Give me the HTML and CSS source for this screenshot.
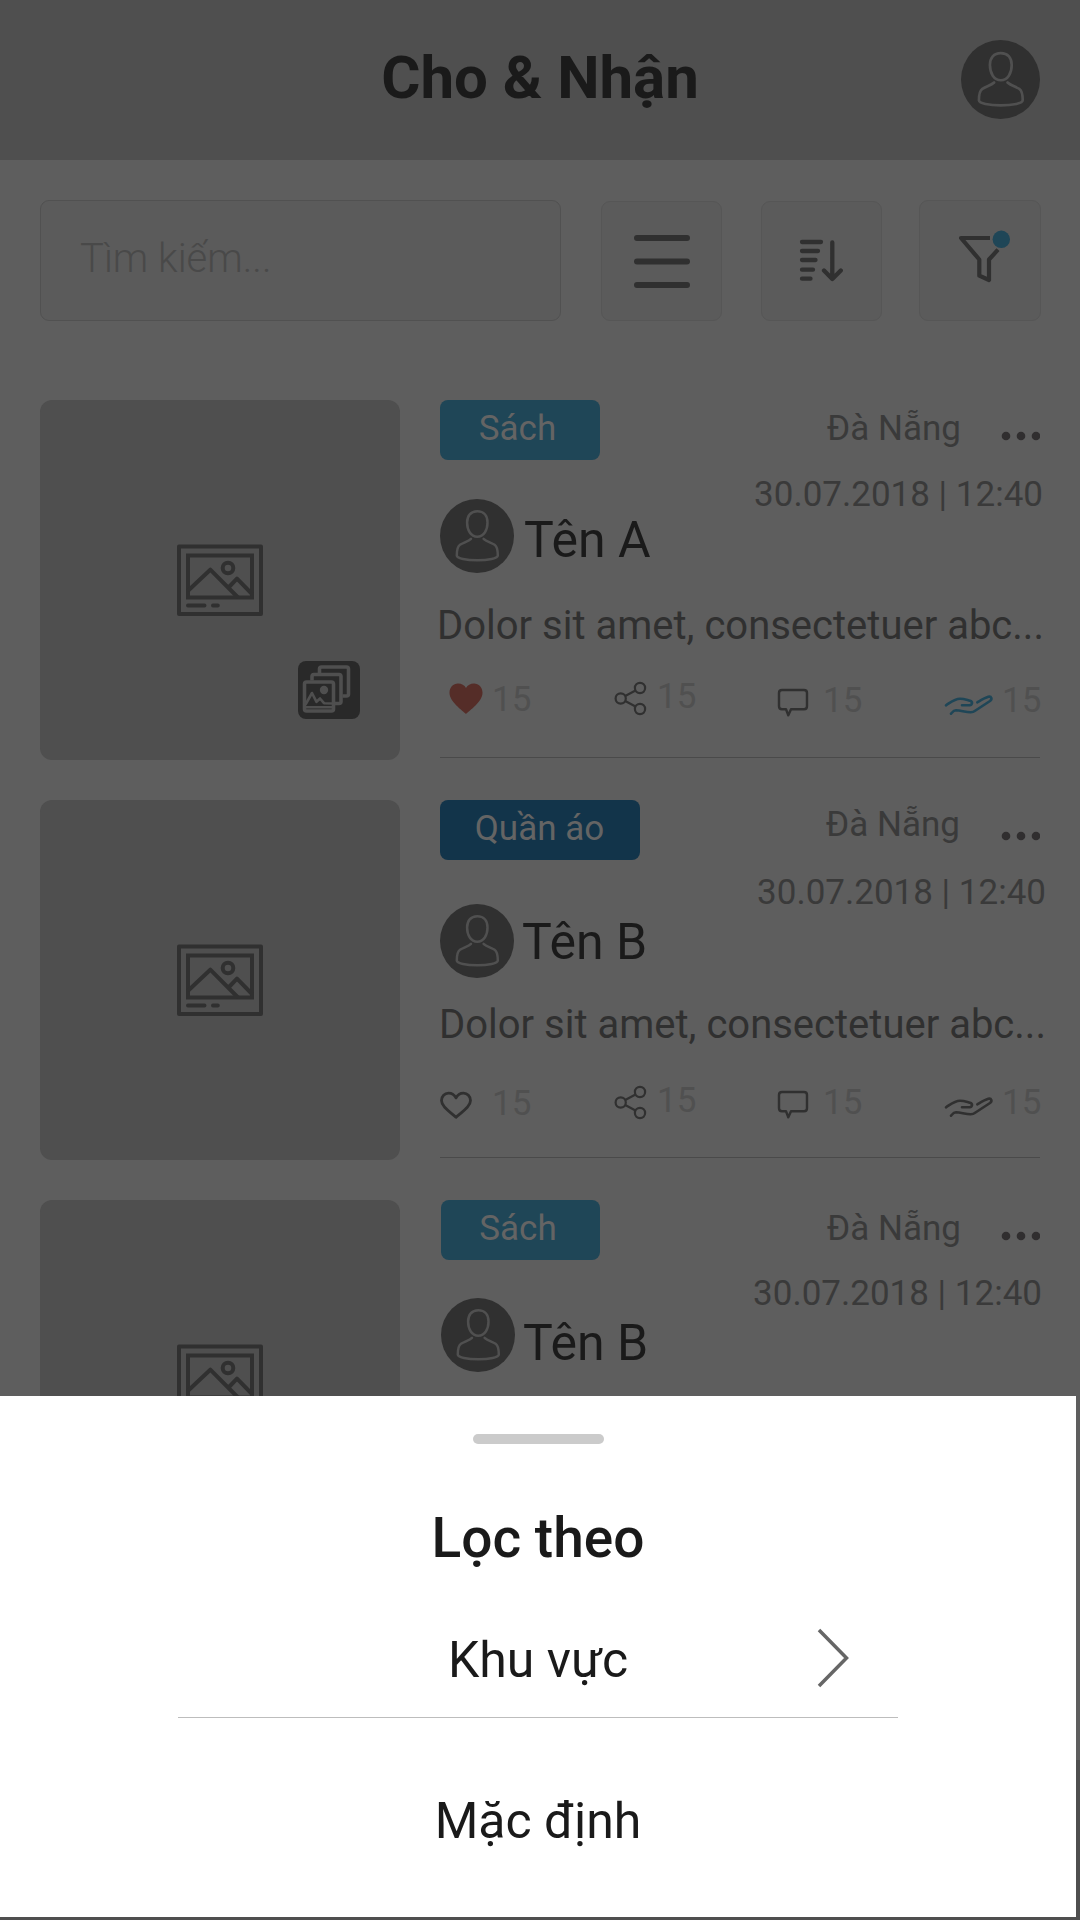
FILE: index.html
```html
<!DOCTYPE html>
<html lang="vi">
<head>
<meta charset="utf-8">
<title>Cho &amp; Nhận</title>
<link rel="stylesheet" href="styles.css">
</head>
<body>
<svg class="defs" aria-hidden="true">
  <symbol id="avatar" viewBox="0 0 74 74">
    <circle cx="37" cy="37" r="37" fill="#303030"/>
    <g fill="none" stroke="#505050" stroke-width="2.5" stroke-linecap="round">
      <path d="M37.300 12.300c-6.600 0-10.200 4.500-10.200 11.200 0 7.600 3.700 14.200 10.200 14.200s10.200-6.600 10.200-14.200c0-6.700-3.600-11.200-10.200-11.200z"/>
      <path d="M31 39.800c-2.500 2.600-7.500 3.700-11 6-3 2-3.200 6-3.200 10.700 0 2.800 9.500 4.800 20.500 4.800s20.500-2 20.500-4.800c0-4.700-.2-8.700-3.200-10.700-3.500-2.300-8.500-3.400-11-6"/>
    </g>
  </symbol>
  <symbol id="picture" viewBox="0 0 86 72">
    <g fill="none" stroke="#303030" stroke-width="4" stroke-linejoin="round" stroke-linecap="round">
      <rect x="2" y="2.500" width="82" height="67.500"/>
      <rect x="11" y="11.500" width="64" height="42" stroke-linejoin="miter"/>
      <circle cx="51" cy="24" r="5.300"/>
      <path stroke-linecap="butt" d="M11 46.800 33.300 25.700 61 53.500M52 43 60 34.700 75 50"/>
      <path d="M11 61.400H27.500M36 61.400H40.800"/>
    </g>
  </symbol>
  <symbol id="gallery" viewBox="0 0 62 58">
    <g fill="none" stroke="#4f4f4f" stroke-width="3.600" stroke-linejoin="round">
      <path d="M21.500 12V8q0-2 2-2h25q2 0 2 2v25q0 2-2 2h-4"/>
      <path d="M14 19.500V15.500q0-2 2-2h25q2 0 2 2v25q0 2-2 2h-4"/>
      <rect x="6.500" y="21" width="29" height="29" rx="2"/>
      <path stroke-width="2.600" d="M7.500 43.500 14 32l4.500 8.800L22 37.500l4 4.700 10 .3M7 46.200H35"/>
    </g>
    <circle cx="26" cy="29" r="4.200" fill="#4f4f4f"/>
  </symbol>
  <symbol id="heart-full" viewBox="0 0 50 50">
    <path fill="#552d28" d="M26 42C22.500 38.500 9.500 30 9.500 20.800c0-5.300 3.800-9.200 8.500-9.200 3.500 0 6.500 1.800 8 4.400 1.500-2.600 4.500-4.400 8-4.400 4.700 0 8.500 3.900 8.500 9.200C42.500 30 29.500 38.500 26 42z"/>
  </symbol>
  <symbol id="heart-line" viewBox="0 0 50 50">
    <path fill="none" stroke="#303030" stroke-width="2.800" stroke-linejoin="round" d="M16 41.300C12 37 1.500 31.500 1.500 24.500c0-4.300 3.200-7.400 7-7.400 3.200 0 6 1.700 7.500 4.800 1.500-3.100 4.300-4.800 7.500-4.800 3.800 0 7 3.100 7 7.400C30.500 31.500 20 37 16 41.300z"/>
  </symbol>
  <symbol id="share" viewBox="0 0 47 50">
    <g fill="none" stroke="#303030" stroke-width="2.200">
      <circle cx="10.700" cy="26.500" r="5.100"/>
      <circle cx="30" cy="16" r="5.100"/>
      <circle cx="30" cy="37" r="5.100"/>
      <path d="M15.200 24 25.500 18.500M15.200 29 25.500 34.500"/>
    </g>
  </symbol>
  <symbol id="comment" viewBox="0 0 50 50">
    <path fill="none" stroke="#303030" stroke-width="2.400" stroke-linejoin="round" d="M10 18H32q3 0 3 3V34.300q0 3-3 3H19l-2.700 6L14 37.300H10q-3 0-3-3V21q0-3 3-3z"/>
  </symbol>
  <symbol id="hand" viewBox="0 0 61 50">
    <path fill="none" stroke="currentColor" stroke-width="2.600" stroke-linecap="round" stroke-linejoin="round" d="M6 33.300C10.500 30.500 14.500 26.800 20 26.700c4.500 0 7 1.300 10 2 3 .8 2.500 4-.5 4.600H22M11 41.700C12.500 40 13.500 38.300 16 38.300c5 .5 10 1.700 14.500 2 2.500.1 3.500-.6 5-1.800L50 29c2.500-2 1.500-5-1.700-4.200C44.500 26 41 28.200 37.300 30.300"/>
  </symbol>
  <symbol id="dots" viewBox="0 0 40 20">
    <g fill="#302e2f"><circle cx="6" cy="10" r="4.300"/><circle cx="21" cy="10" r="4.300"/><circle cx="36" cy="10" r="4.300"/></g>
  </symbol>
</svg>

<div class="screen">
  <header class="topbar">
    <h1>Cho &amp; Nhận</h1>
    <svg class="profile"><use href="#avatar"/></svg>
  </header>

  <div class="toolbar">
    <div class="search">Tìm kiếm...</div>
    <div class="tool">
      <svg viewBox="0 0 121 120"><path d="M36 37H86M36 60.500H86M36 84H86" stroke-width="6"/></svg>
    </div>
    <div class="tool">
      <svg viewBox="0 0 121 120"><path d="M41 41H60M41 50H57M41 59H54.500M41 68.700H52M41 77.700H49.500M71.300 41.500V78M63 69.500 71.300 78 79.800 69.500" stroke-width="4.300"/></svg>
    </div>
    <div class="tool tool-filter">
      <svg viewBox="0 0 121 120"><path class="butt" d="M71 38H42L60.300 59.500V75.700L70 80V59.500L79 49.700" stroke-width="4.200"/><circle cx="82.300" cy="39.300" r="8.700"/></svg>
    </div>
  </div>

  <main class="list">
    <article class="card">
      <div class="thumb">
        <svg class="picture"><use href="#picture"/></svg>
        <svg class="gallery"><use href="#gallery"/></svg>
      </div>
      <div class="body">
        <div class="top">
          <div class="left">
            <span class="tag book">Sách</span>
            <div class="author"><svg class="avatar"><use href="#avatar"/></svg><span class="name">Tên A</span></div>
          </div>
          <div class="right">
            <div class="where"><span class="place">Đà Nẵng</span><svg class="dots"><use href="#dots"/></svg></div>
            <div class="date">30.07.2018 | 12:40</div>
          </div>
        </div>
        <p class="desc">Dolor sit amet, consectetuer abc...</p>
        <div class="stats">
          <span class="stat like"><svg><use href="#heart-full"/></svg>15</span>
          <span class="stat share"><svg><use href="#share"/></svg>15</span>
          <span class="stat talk"><svg><use href="#comment"/></svg>15</span>
          <span class="stat give"><svg class="active"><use href="#hand"/></svg>15</span>
        </div>
      </div>
    </article>

    <article class="card">
      <div class="thumb"><svg class="picture"><use href="#picture"/></svg></div>
      <div class="body">
        <div class="top">
          <div class="left">
            <span class="tag clothes">Quần áo</span>
            <div class="author"><svg class="avatar"><use href="#avatar"/></svg><span class="name">Tên B</span></div>
          </div>
          <div class="right">
            <div class="where"><span class="place">Đà Nẵng</span><svg class="dots"><use href="#dots"/></svg></div>
            <div class="date">30.07.2018 | 12:40</div>
          </div>
        </div>
        <p class="desc">Dolor sit amet, consectetuer abc...</p>
        <div class="stats">
          <span class="stat like"><svg><use href="#heart-line"/></svg>15</span>
          <span class="stat share"><svg><use href="#share"/></svg>15</span>
          <span class="stat talk"><svg><use href="#comment"/></svg>15</span>
          <span class="stat give"><svg><use href="#hand"/></svg>15</span>
        </div>
      </div>
    </article>

    <article class="card">
      <div class="thumb"><svg class="picture"><use href="#picture"/></svg></div>
      <div class="body">
        <div class="top">
          <div class="left">
            <span class="tag book">Sách</span>
            <div class="author"><svg class="avatar"><use href="#avatar"/></svg><span class="name">Tên B</span></div>
          </div>
          <div class="right">
            <div class="where"><span class="place">Đà Nẵng</span><svg class="dots"><use href="#dots"/></svg></div>
            <div class="date">30.07.2018 | 12:40</div>
          </div>
        </div>
      </div>
    </article>
  </main>

  <footer class="bottombar"></footer>

  <section class="sheet">
    <div class="handle"></div>
    <h2>Lọc theo</h2>
    <div class="option"><span></span><span>Khu vực</span><svg class="chevron" viewBox="0 0 32 60"><path d="M2 2 29.500 30 2 58"/></svg></div>
    <div class="option last"><span></span><span>Mặc định</span></div>
  </section>
</div>
</body>
</html>
```
FILE: styles.css
```css
* { box-sizing: border-box; }

body {
  margin: 0;
  font-family: Roboto, "Liberation Sans", sans-serif;
  background: #5e5e5e;
}

h1, h2, p { margin: 0; }

svg { display: block; flex: none; }

.defs { display: none; }

.screen {
  position: relative;
  display: flex;
  flex-direction: column;
  width: 1080px;
  height: 1920px;
  overflow: hidden;
}

/* Header */
.topbar {
  display: grid;
  grid-template-columns: 80px 1fr 80px;
  align-items: center;
  height: 160px;
  padding: 0 40px;
  background: #4f4f4f;
}

.topbar h1 {
  grid-column: 2;
  font-size: 60px;
  font-weight: 700;
  line-height: 70px;
  padding-bottom: 4px;
  text-align: center;
  color: #1a1a1a;
}

.profile { width: 79px; height: 79px; margin: -1px 0 0 1px; }

/* Search and tools */
.toolbar {
  display: flex;
  align-items: flex-end;
  height: 161px;
  padding: 0 39px 0 40px;
}

.search {
  width: 521px;
  height: 121px;
  margin-right: 40px;
  padding-left: 39px;
  border: 1px solid #515151;
  border-radius: 9px;
  background: #5b5b5b;
  font-size: 40px;
  font-weight: 300;
  line-height: 116px;
  color: #494949;
}

.tool {
  width: 121px;
  height: 120px;
  margin-right: 39px;
  border: 1px solid #565656;
  border-radius: 9px;
  background: #5b5b5b;
}

.tool-filter { width: 122px; height: 121px; margin: 0 0 0 -2px; }

.tool svg {
  width: 121px;
  height: 120px;
  margin: -1px;
  fill: none;
  stroke: #303030;
  stroke-linecap: round;
  stroke-linejoin: round;
}

.tool .butt { stroke-linecap: butt; }
.tool circle { fill: #1f4657; stroke: none; }

/* List */
.list {
  display: flex;
  flex-direction: column;
  gap: 40px;
  flex: none;
  height: 1439px;
  padding: 79px 40px 0;
  overflow: hidden;
}

.card { display: flex; gap: 40px; flex: none; height: 360px; }

.thumb {
  position: relative;
  display: flex;
  align-items: center;
  justify-content: center;
  width: 360px;
  border-radius: 12px;
  background: #4f4f4f;
}

.picture { width: 86px; height: 72px; }

.gallery {
  position: absolute;
  right: 40px;
  bottom: 41px;
  width: 62px;
  height: 58px;
  border-radius: 8px;
  background: #292929;
}

.body { width: 600px; height: 358px; border-bottom: 1px solid #4a4a4a; }

.top { display: flex; justify-content: space-between; height: 200px; }

.tag {
  display: block;
  height: 60px;
  border-radius: 8px;
  font-size: 35px;
  line-height: 58px;
  text-align: center;
  color: #646464;
}

.book { width: 160px; padding-right: 5px; background: #1f4657; }
.clothes { width: 200px; padding-right: 1px; background: #12344a; }

.author { display: flex; gap: 10px; margin-top: 39px; }
.avatar { width: 74px; height: 74px; }
.name { margin-top: 4px; font-size: 50px; line-height: 74px; color: #1a1a1a; }

.where { display: flex; justify-content: flex-end; gap: 39px; height: 56px; }
.place { font-size: 35px; line-height: 58px; color: #3a3a3a; }
.dots { width: 40px; height: 20px; margin-top: 26px; }

.date {
  margin-top: 10px;
  margin-right: -3px;
  font-size: 35px;
  line-height: 57px;
  text-align: right;
  color: #3a3a3a;
}

.desc {
  margin: 1px 0 0 -3px;
  font-size: 40px;
  line-height: 50px;
  white-space: nowrap;
  color: #303030;
}

.stats { display: grid; grid-template-columns: 170px 162px 168px 102px; margin-top: 21px; }

.stat { display: flex; height: 50px; font-size: 35px; line-height: 50px; color: #505050; }
.stat svg { height: 50px; color: #303030; }
.stat svg.active { color: #1f4657; }

.like { line-height: 56px; }
.like svg { width: 50px; margin-right: 2px; }
.share { line-height: 50px; }
.share svg { width: 47px; }
.talk, .give { line-height: 58px; }
.talk svg { width: 50px; margin-right: 1px; }
.give svg { width: 61px; margin-right: 1px; }

.card:nth-child(2) .author { gap: 8px; margin-top: 44px; }
.card:nth-child(2) .name { margin-top: 1px; }
.card:nth-child(2) .where { gap: 40px; }
.card:nth-child(2) .place { line-height: 50px; }
.card:nth-child(2) .date { margin-top: 8px; margin-right: -6px; }
.card:nth-child(2) .desc { margin: 0 0 0 -1px; }
.card:nth-child(2) .stats { margin-top: 24px; }
.card:nth-child(2) .like,
.card:nth-child(2) .share { margin-top: 2px; }

.card:nth-child(3) .author { gap: 8px; margin-top: 38px; }
.card:nth-child(3) .name { margin-top: 8px; }
.card:nth-child(3) .date { margin-top: 9px; margin-right: -2px; }
.card:nth-child(3) .left { margin-left: 1px; }
.card:nth-child(3) .tag { width: 159px; }

.bottombar { height: 160px; background: #4f4f4f; }

/* Filter sheet over the list */
.sheet {
  position: absolute;
  left: 0;
  bottom: 3px;
  display: flex;
  flex-direction: column;
  align-items: center;
  width: 1076px;
  height: 521px;
  background: #fff;
  color: #1a1a1a;
}

.handle {
  flex: none;
  width: 131px;
  height: 10px;
  margin-top: 38px;
  border-radius: 5px;
  background: #cbcbcb;
}

.sheet h2 { margin-top: 62px; font-size: 55px; font-weight: 500; line-height: 64px; }

.option {
  display: grid;
  grid-template-columns: 1fr auto 1fr;
  align-items: center;
  flex: none;
  width: 720px;
  height: 116px;
  margin-top: 32px;
  border-bottom: 1px solid #bdbdbd;
  font-size: 50px;
}

.option.last { height: 198px; margin: 0; padding-top: 8px; border: 0; }

.chevron {
  justify-self: end;
  width: 32px;
  height: 60px;
  margin: -4px 49px 0 0;
  fill: none;
  stroke: #666;
  stroke-width: 3.500;
}
```
